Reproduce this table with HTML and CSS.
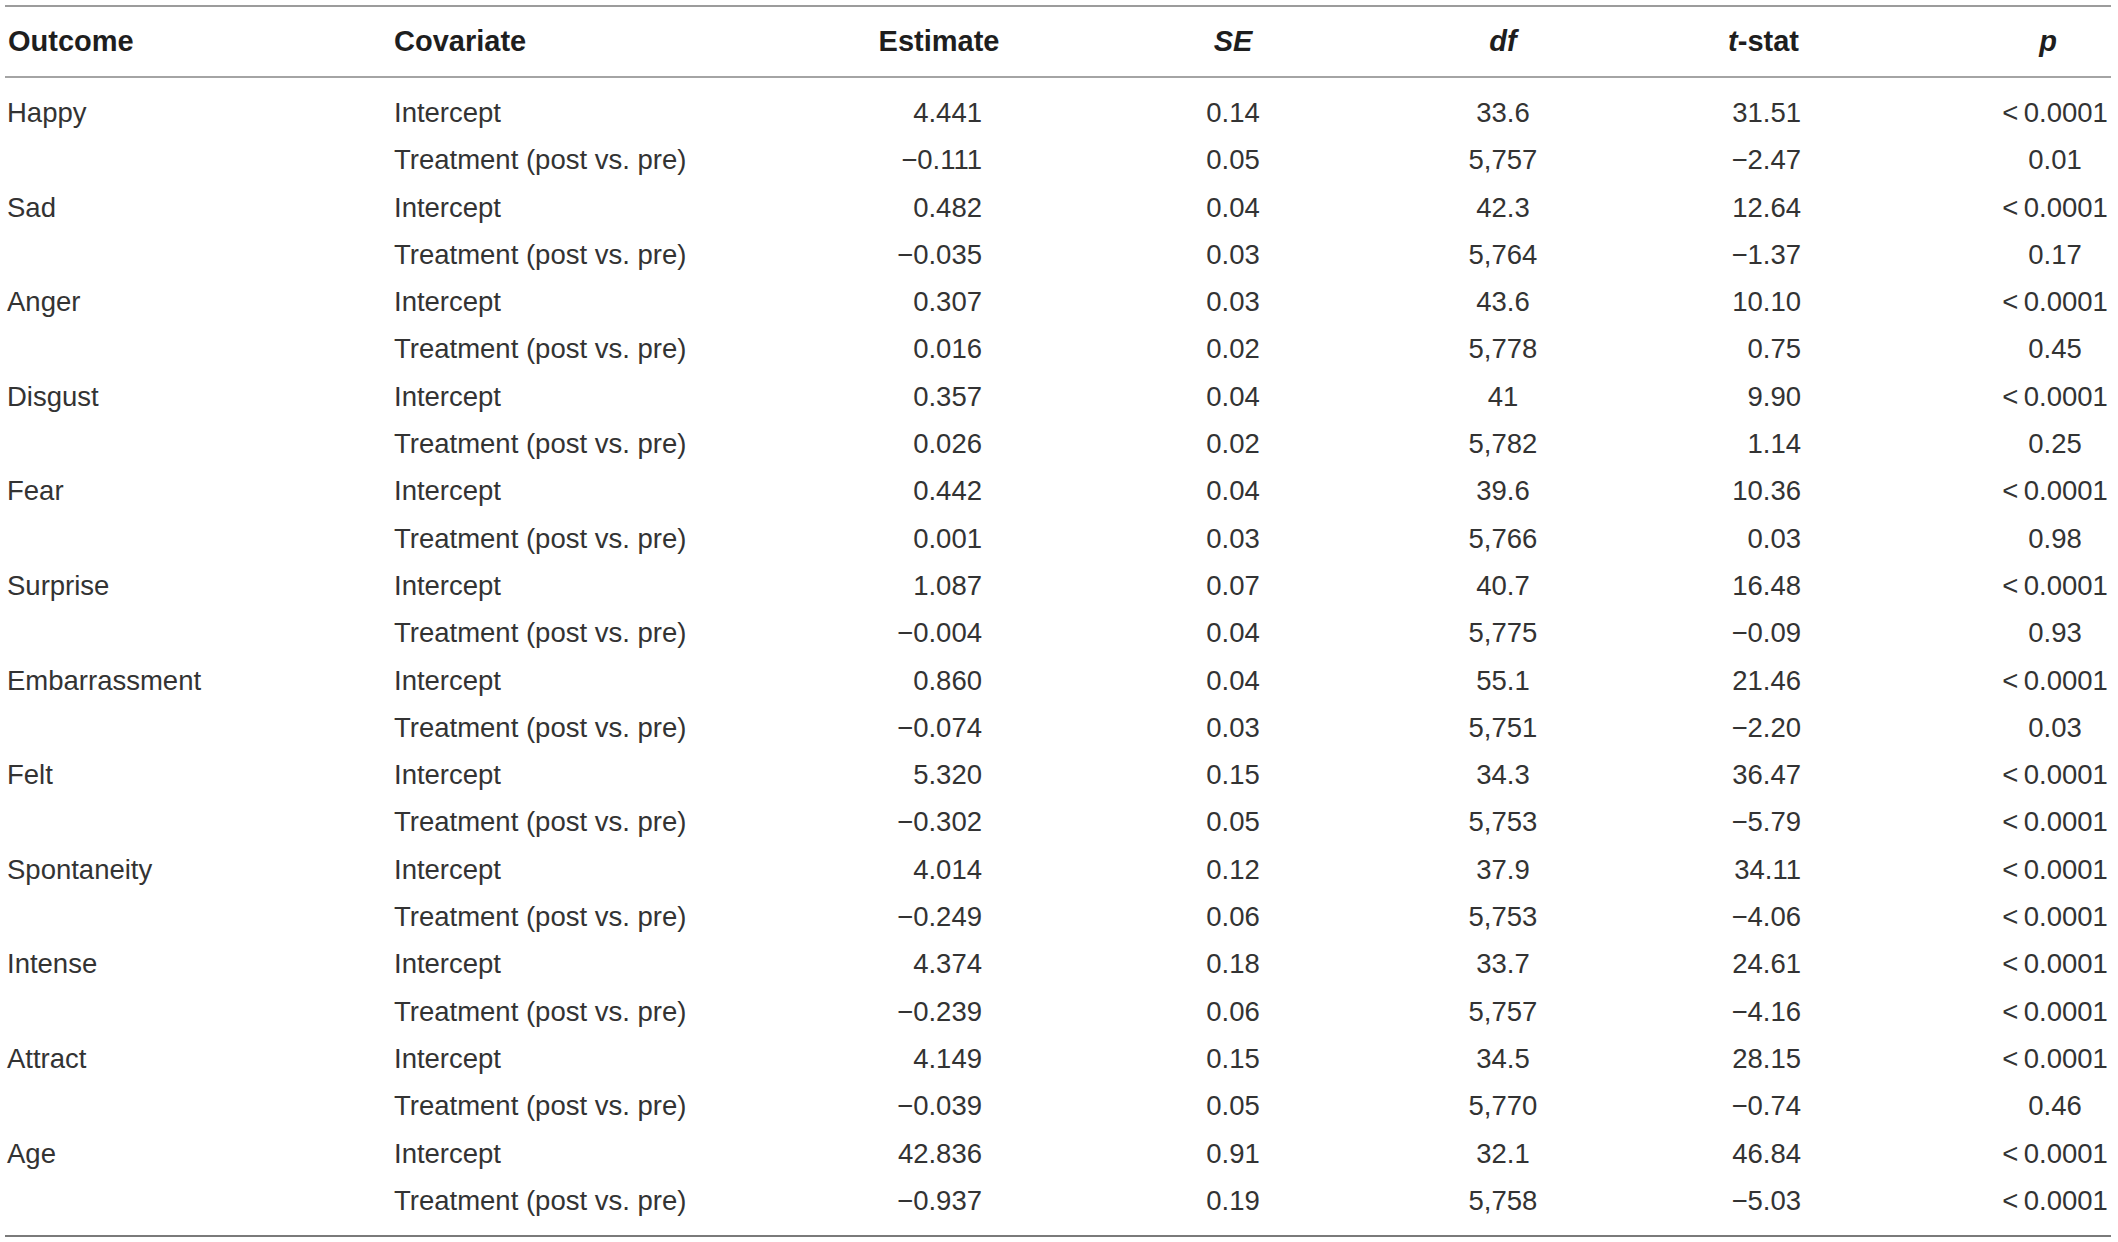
FILE: index.html
```html
<!DOCTYPE html>
<html lang="en">
<head>
<meta charset="utf-8">
<title>Mixed model estimates</title>
<link rel="stylesheet" href="styles.css">
</head>
<body>
<table class="results">
  <colgroup>
    <col class="c-outcome">
    <col class="c-cov">
    <col class="c-est">
    <col class="c-se">
    <col class="c-df">
    <col class="c-t">
    <col class="c-p">
  </colgroup>
  <thead>
    <tr>
      <th class="h-left h-outcome">Outcome</th>
      <th class="h-left h-cov">Covariate</th>
      <th class="h-est">Estimate</th>
      <th class="h-se"><em>SE</em></th>
      <th class="h-df"><em>df</em></th>
      <th class="h-t"><em>t</em>-stat</th>
      <th class="h-p"><em>p</em></th>
    </tr>
  </thead>
  <tbody>
    <tr><td class="outcome">Happy</td><td class="cov">Intercept</td><td class="est">4.441</td><td class="se">0.14</td><td class="df">33.6</td><td class="t">31.51</td><td class="p">&lt;&#8201;0.0001</td></tr>
    <tr><td class="outcome"></td><td class="cov">Treatment (post vs. pre)</td><td class="est">&minus;0.111</td><td class="se">0.05</td><td class="df">5,757</td><td class="t">&minus;2.47</td><td class="p">0.01</td></tr>
    <tr><td class="outcome">Sad</td><td class="cov">Intercept</td><td class="est">0.482</td><td class="se">0.04</td><td class="df">42.3</td><td class="t">12.64</td><td class="p">&lt;&#8201;0.0001</td></tr>
    <tr><td class="outcome"></td><td class="cov">Treatment (post vs. pre)</td><td class="est">&minus;0.035</td><td class="se">0.03</td><td class="df">5,764</td><td class="t">&minus;1.37</td><td class="p">0.17</td></tr>
    <tr><td class="outcome">Anger</td><td class="cov">Intercept</td><td class="est">0.307</td><td class="se">0.03</td><td class="df">43.6</td><td class="t">10.10</td><td class="p">&lt;&#8201;0.0001</td></tr>
    <tr><td class="outcome"></td><td class="cov">Treatment (post vs. pre)</td><td class="est">0.016</td><td class="se">0.02</td><td class="df">5,778</td><td class="t">0.75</td><td class="p">0.45</td></tr>
    <tr><td class="outcome">Disgust</td><td class="cov">Intercept</td><td class="est">0.357</td><td class="se">0.04</td><td class="df">41</td><td class="t">9.90</td><td class="p">&lt;&#8201;0.0001</td></tr>
    <tr><td class="outcome"></td><td class="cov">Treatment (post vs. pre)</td><td class="est">0.026</td><td class="se">0.02</td><td class="df">5,782</td><td class="t">1.14</td><td class="p">0.25</td></tr>
    <tr><td class="outcome">Fear</td><td class="cov">Intercept</td><td class="est">0.442</td><td class="se">0.04</td><td class="df">39.6</td><td class="t">10.36</td><td class="p">&lt;&#8201;0.0001</td></tr>
    <tr><td class="outcome"></td><td class="cov">Treatment (post vs. pre)</td><td class="est">0.001</td><td class="se">0.03</td><td class="df">5,766</td><td class="t">0.03</td><td class="p">0.98</td></tr>
    <tr><td class="outcome">Surprise</td><td class="cov">Intercept</td><td class="est">1.087</td><td class="se">0.07</td><td class="df">40.7</td><td class="t">16.48</td><td class="p">&lt;&#8201;0.0001</td></tr>
    <tr><td class="outcome"></td><td class="cov">Treatment (post vs. pre)</td><td class="est">&minus;0.004</td><td class="se">0.04</td><td class="df">5,775</td><td class="t">&minus;0.09</td><td class="p">0.93</td></tr>
    <tr><td class="outcome">Embarrassment</td><td class="cov">Intercept</td><td class="est">0.860</td><td class="se">0.04</td><td class="df">55.1</td><td class="t">21.46</td><td class="p">&lt;&#8201;0.0001</td></tr>
    <tr><td class="outcome"></td><td class="cov">Treatment (post vs. pre)</td><td class="est">&minus;0.074</td><td class="se">0.03</td><td class="df">5,751</td><td class="t">&minus;2.20</td><td class="p">0.03</td></tr>
    <tr><td class="outcome">Felt</td><td class="cov">Intercept</td><td class="est">5.320</td><td class="se">0.15</td><td class="df">34.3</td><td class="t">36.47</td><td class="p">&lt;&#8201;0.0001</td></tr>
    <tr><td class="outcome"></td><td class="cov">Treatment (post vs. pre)</td><td class="est">&minus;0.302</td><td class="se">0.05</td><td class="df">5,753</td><td class="t">&minus;5.79</td><td class="p">&lt;&#8201;0.0001</td></tr>
    <tr><td class="outcome">Spontaneity</td><td class="cov">Intercept</td><td class="est">4.014</td><td class="se">0.12</td><td class="df">37.9</td><td class="t">34.11</td><td class="p">&lt;&#8201;0.0001</td></tr>
    <tr><td class="outcome"></td><td class="cov">Treatment (post vs. pre)</td><td class="est">&minus;0.249</td><td class="se">0.06</td><td class="df">5,753</td><td class="t">&minus;4.06</td><td class="p">&lt;&#8201;0.0001</td></tr>
    <tr><td class="outcome">Intense</td><td class="cov">Intercept</td><td class="est">4.374</td><td class="se">0.18</td><td class="df">33.7</td><td class="t">24.61</td><td class="p">&lt;&#8201;0.0001</td></tr>
    <tr><td class="outcome"></td><td class="cov">Treatment (post vs. pre)</td><td class="est">&minus;0.239</td><td class="se">0.06</td><td class="df">5,757</td><td class="t">&minus;4.16</td><td class="p">&lt;&#8201;0.0001</td></tr>
    <tr><td class="outcome">Attract</td><td class="cov">Intercept</td><td class="est">4.149</td><td class="se">0.15</td><td class="df">34.5</td><td class="t">28.15</td><td class="p">&lt;&#8201;0.0001</td></tr>
    <tr><td class="outcome"></td><td class="cov">Treatment (post vs. pre)</td><td class="est">&minus;0.039</td><td class="se">0.05</td><td class="df">5,770</td><td class="t">&minus;0.74</td><td class="p">0.46</td></tr>
    <tr><td class="outcome">Age</td><td class="cov">Intercept</td><td class="est">42.836</td><td class="se">0.91</td><td class="df">32.1</td><td class="t">46.84</td><td class="p">&lt;&#8201;0.0001</td></tr>
    <tr><td class="outcome"></td><td class="cov">Treatment (post vs. pre)</td><td class="est">&minus;0.937</td><td class="se">0.19</td><td class="df">5,758</td><td class="t">&minus;5.03</td><td class="p">&lt;&#8201;0.0001</td></tr>
  </tbody>
</table>
</body>
</html>
```

FILE: styles.css
```css
html, body {
  margin: 0;
  padding: 0;
  background: #ffffff;
}

body {
  padding: 5px 0 0 5px;
  font-family: "Liberation Sans", Arial, sans-serif;
  color: #333333;
}

.results {
  width: 2106px;
  border-collapse: collapse;
  table-layout: fixed;
  font-size: 27.5px;
}

.c-outcome { width: 384px; }
.c-cov { width: 411px; }
.c-est { width: 278px; }
.c-se { width: 310px; }
.c-df { width: 230px; }
.c-t { width: 377px; }
.c-p { width: 116px; }

.results th {
  font-size: 29px;
  font-weight: bold;
  color: #1e1e1e;
  height: 69px;
  padding: 0;
  text-align: center;
  vertical-align: middle;
  border-top: 2px solid #9c9c9c;
  border-bottom: 2px solid #a4a4a4;
  white-space: nowrap;
}

.results th em {
  font-style: italic;
}

.results th.h-left {
  text-align: left;
}

.results th.h-outcome { padding-left: 3px; }
.results th.h-cov { padding-left: 5px; }
.results th.h-t { padding-right: 86px; }
.results th.h-p { padding-right: 10px; }

.results td {
  height: 47.3px;
  padding: 0;
  line-height: 47.3px;
  vertical-align: middle;
  white-space: nowrap;
}

.results tbody tr:first-child td {
  padding-top: 11px;
}

.results tbody tr:last-child td {
  padding-bottom: 11px;
  border-bottom: 2px solid #7a7a7a;
}

.results td.outcome { padding-left: 2px; text-align: left; }
.results td.cov { padding-left: 5px; text-align: left; }
.results td.est { text-align: right; padding-right: 96px; }
.results td.se { text-align: center; }
.results td.df { text-align: center; }
.results td.t { text-align: right; padding-right: 194px; }
.results td.p { text-align: center; padding-left: 4px; }
```
